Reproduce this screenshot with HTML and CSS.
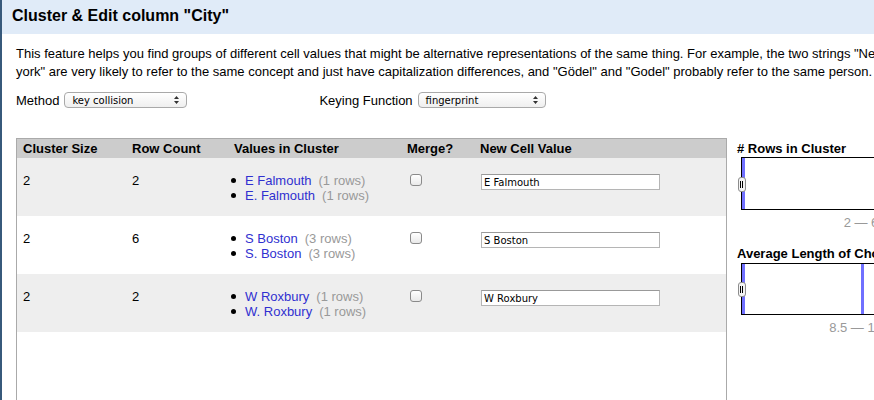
FILE: index.html
```html
<!DOCTYPE html>
<html>
<head>
<meta charset="utf-8">
<link rel="stylesheet" href="styles.css">
</head>
<body>
<div class="dialog">
  <div class="dialog-header">Cluster &amp; Edit column "City"</div>
  <div class="dialog-body">
    <p class="intro">This feature helps you find groups of different cell values that might be alternative representations of the same thing. For example, the two strings "New York" and "new york" are very likely to refer to the same concept and just have capitalization differences, and "Gödel" and "Godel" probably refer to the same person.</p>
    <div class="controls">
      <span class="ctl-label">Method</span>
      <div class="select select-method"><span class="select-text">key collision</span><svg class="arrows" width="5" height="8" viewBox="0 0 5 8"><path d="M0 3 L2.5 0 L5 3 Z M0 5 L2.5 8 L5 5 Z" fill="#333"/></svg></div>
      <span class="ctl-label ctl-keying">Keying Function</span>
      <div class="select select-keying"><span class="select-text">fingerprint</span><svg class="arrows" width="5" height="8" viewBox="0 0 5 8"><path d="M0 3 L2.5 0 L5 3 Z M0 5 L2.5 8 L5 5 Z" fill="#333"/></svg></div>
    </div>
    <div class="main">
      <div class="table-panel">
        <table class="clusters">
          <thead>
            <tr>
              <th class="c1">Cluster Size</th>
              <th class="c2">Row Count</th>
              <th class="c3">Values in Cluster</th>
              <th class="c4">Merge?</th>
              <th class="c5">New Cell Value</th>
            </tr>
          </thead>
          <tbody>
            <tr class="odd">
              <td>2</td>
              <td>2</td>
              <td><ul class="values"><li><a>E Falmouth</a><span class="count">(1 rows)</span></li><li><a>E. Falmouth</a><span class="count">(1 rows)</span></li></ul></td>
              <td><input type="checkbox" class="chk"></td>
              <td><input type="text" class="newval" value="E Falmouth"></td>
            </tr>
            <tr class="even">
              <td>2</td>
              <td>6</td>
              <td><ul class="values"><li><a>S Boston</a><span class="count">(3 rows)</span></li><li><a>S. Boston</a><span class="count">(3 rows)</span></li></ul></td>
              <td><input type="checkbox" class="chk"></td>
              <td><input type="text" class="newval" value="S Boston"></td>
            </tr>
            <tr class="odd">
              <td>2</td>
              <td>2</td>
              <td><ul class="values"><li><a>W Roxbury</a><span class="count">(1 rows)</span></li><li><a>W. Roxbury</a><span class="count">(1 rows)</span></li></ul></td>
              <td><input type="checkbox" class="chk"></td>
              <td><input type="text" class="newval" value="W Roxbury"></td>
            </tr>
          </tbody>
        </table>
      </div>
      <div class="facets">
        <div class="facet">
          <div class="facet-title"># Rows in Cluster</div>
          <div class="chart chart-rows">
            <span class="bar" style="left:0px"></span>
            <span class="handle"></span>
          </div>
          <div class="range">2 — 6</div>
        </div>
        <div class="facet">
          <div class="facet-title">Average Length of Choices</div>
          <div class="chart chart-len">
            <span class="bar" style="left:0px"></span>
            <span class="bar" style="left:119px"></span>
            <span class="handle"></span>
          </div>
          <div class="range">8.5 — 10.5</div>
        </div>
      </div>
    </div>
  </div>
</div>
</body>
</html>
```

FILE: styles.css
```css
html, body {
  margin: 0;
  padding: 0;
  overflow: hidden;
  background: #fff;
}
body {
  width: 874px;
  height: 400px;
  font-family: "Liberation Sans", Arial, sans-serif;
  font-size: 13px;
  color: #000;
}
.dialog {
  border-left: 2px solid #37597b;
  height: 400px;
  overflow: hidden;
  box-sizing: border-box;
}
.dialog-header {
  background: #e0ebf8;
  font-size: 16px;
  font-weight: bold;
  line-height: 18px;
  padding: 7px 10px 9px;
  white-space: nowrap;
}
.dialog-body {
  padding: 0 0 0 14px;
}
.intro {
  margin: 11px 0 0;
  line-height: 18px;
  width: 975px;
}
.controls {
  display: flex;
  align-items: center;
  margin-top: 10px;
  height: 18px;
}
.ctl-label {
  margin-right: 5px;
}
.ctl-keying {
  margin-left: 132px;
}
.select {
  box-sizing: border-box;
  height: 16px;
  border: 1px solid #a9a9a9;
  border-radius: 4px;
  background: linear-gradient(#ffffff, #efefef);
  display: flex;
  align-items: center;
  justify-content: space-between;
  padding: 0 7px 0 7px;
  font-family: "DejaVu Sans", sans-serif;
  font-size: 10px;
}
.select-method { width: 123px; }
.select-keying { width: 128px; }
.arrows { display: block; }
.main {
  display: flex;
  margin-top: 29px;
  align-items: flex-start;
}
.table-panel {
  flex: none;
  width: 711px;
  height: 300px;
  box-sizing: border-box;
  border: 1px solid #aaa;
  border-bottom: none;
}
.clusters {
  border-collapse: collapse;
  width: 100%;
  table-layout: fixed;
}
.clusters th {
  background: #cccccc;
  text-align: left;
  font-weight: bold;
  height: 19px;
  padding: 0 6px;
  line-height: 15px;
  vertical-align: middle;
}
.c1 { width: 97px; }
.c2 { width: 90px; }
.c3 { width: 161px; }
.c4 { width: 61px; }
.clusters td {
  height: 58px;
  box-sizing: border-box;
  padding: 15px 6px 0;
  vertical-align: top;
  line-height: 15px;
}
.clusters tr.odd td { background: #eeeeee; }
.clusters tr.even td { background: #ffffff; }
.values {
  list-style: none;
  margin: 0;
  padding: 0;
}
.values li::before {
  content: "";
  display: inline-block;
  width: 5px;
  height: 5px;
  border-radius: 50%;
  background: #000;
  margin: 0 9px 2px -3px;
  vertical-align: middle;
}
.values a {
  color: #3030d0;
}
.count {
  color: #999;
  margin-left: 7px;
}
.chk {
  appearance: none;
  -webkit-appearance: none;
  display: block;
  width: 12px;
  height: 12px;
  margin: 1px 0 0 3px;
  box-sizing: border-box;
  border: 1px solid #8a8a8a;
  border-radius: 3px;
  background: linear-gradient(#ffffff, #e9e9e9);
}
.newval {
  display: block;
  box-sizing: border-box;
  width: 179px;
  height: 16px;
  margin: 1px 0 0 1px;
  border: 1px solid #b5b5b5;
  border-top-color: #999;
  padding: 0 2px;
  font-family: "DejaVu Sans", sans-serif;
  font-size: 10px;
  color: #000;
  background: #fff;
}
.facets {
  flex: none;
  width: 250px;
  margin-left: 10px;
  padding-top: 3px;
}
.facet-title {
  font-weight: bold;
  line-height: 15px;
  white-space: nowrap;
}
.chart {
  position: relative;
  margin: 1px 0 0 4px;
  box-sizing: border-box;
  width: 240px;
  border: 1px solid #000;
}
.chart-rows { height: 53px; }
.chart-len { height: 52px; margin-top: 2px; }
.bar {
  position: absolute;
  top: 0;
  bottom: 0;
  width: 3px;
  background: #7070ff;
}
.handle {
  position: absolute;
  left: -4px;
  top: 50%;
  margin-top: -7px;
  width: 8px;
  height: 15px;
  box-sizing: border-box;
  border: 1px solid #8c8c8c;
  border-radius: 3px;
  background: #f4f4f4;
}
.handle::before {
  content: "";
  position: absolute;
  left: 1px;
  top: 3px;
  width: 1px;
  height: 7px;
  border-left: 1px solid #000;
  border-right: 1px solid #000;
}
.range {
  color: #999;
  line-height: 15px;
  margin: 5px 0 0 4px;
  width: 240px;
  text-align: center;
  white-space: nowrap;
}
.facet + .facet { margin-top: 16px; }
```
